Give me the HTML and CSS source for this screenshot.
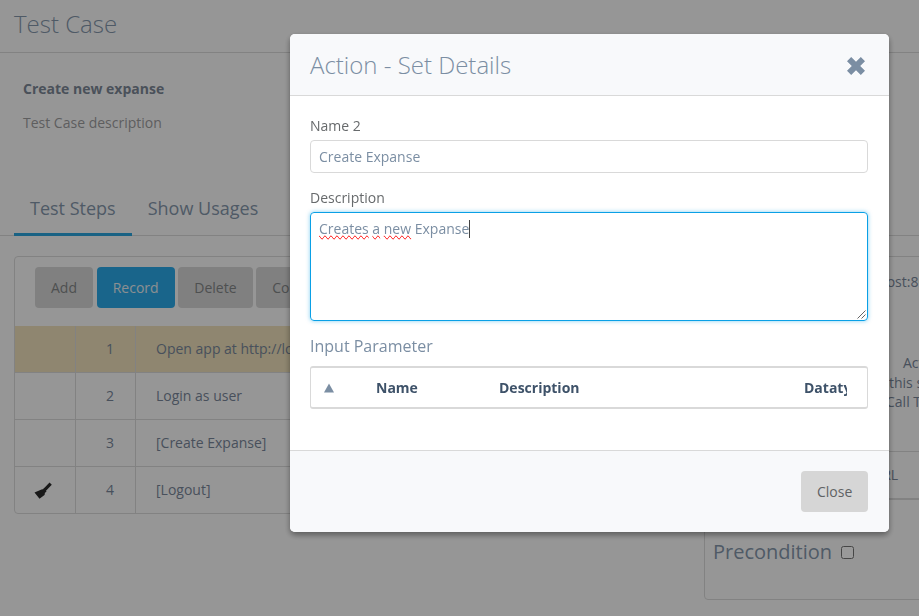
FILE: index.html
```html
<!DOCTYPE html>
<html lang="en">
<head>
    <meta charset="UTF-8">
    <meta name="viewport" content="width=device-width, initial-scale=1.0">
    <title>Test Case</title>
    <link rel="stylesheet" href="styles.css">
</head>
<body>
    <header class="page-head">
        <h1>Test Case</h1>
    </header>

    <section class="summary">
        <p class="summary-name">Create new expanse</p>
        <p class="summary-desc">Test Case description</p>
    </section>

    <nav class="tabs">
        <a class="tab active" href="#">Test Steps</a>
        <a class="tab" href="#">Show Usages</a>
    </nav>

    <main class="content">
        <section class="steps">
            <div class="toolbar">
                <button class="btn">Add</button>
                <button class="btn btn-blue">Record</button>
                <button class="btn">Delete</button>
                <button class="btn">Copy</button>
            </div>
            <div class="step step-warn">
                <div class="step-mark"></div>
                <div class="step-num">1</div>
                <div class="step-text">Open app at http://localhost:8080</div>
            </div>
            <div class="step">
                <div class="step-mark"></div>
                <div class="step-num">2</div>
                <div class="step-text">Login as user</div>
            </div>
            <div class="step">
                <div class="step-mark"></div>
                <div class="step-num">3</div>
                <div class="step-text">[Create Expanse]</div>
            </div>
            <div class="step">
                <div class="step-mark">
                    <svg class="broom" viewBox="0 0 18 17"><path d="M15.500 0.500L17.800 2.800L12 8.800L12.500 9.500L10.800 11Q11 12 10.500 13L5.500 16.800L0.500 10.500L7.500 7.500Q8.500 7 9 7.200L10 6L10.500 5.800Z"/></svg>
                </div>
                <div class="step-num">4</div>
                <div class="step-text">[Logout]</div>
            </div>
        </section>

        <aside class="side">
            <section class="side-box">
                <p class="side-url">http://localhost:8080</p>
                <p class="side-note">
                    <span class="note-a">Actions of</span>
                    <span class="note-b">this step</span>
                    <span class="note-c">Call Test</span>
                </p>
                <div class="side-row">URL</div>
            </section>
            <section class="pre-box">
                <span class="pre-label">Precondition</span>
                <input class="pre-check" type="checkbox">
            </section>
        </aside>
    </main>

    <div class="overlay"></div>

    <div class="modal">
        <div class="modal-head">
            <h2>Action - Set Details</h2>
            <svg class="modal-close" viewBox="0 0 20 20"><path d="M5.200 1l4.800 4.800 4.800-4.800 4.200 4.200-4.800 4.800 4.800 4.800-4.200 4.200-4.800-4.800-4.800 4.800-4.200-4.200 4.800-4.800-4.800-4.800z"/></svg>
        </div>
        <div class="modal-body">
            <label class="field-label">Name 2</label>
            <input class="field" type="text" value="Create Expanse">
            <label class="field-label">Description</label>
            <div class="area">
                <span class="typo">Creates</span> <span class="typo">a</span> <span class="typo">new</span> Expanse<span class="caret"></span>
                <svg class="grip" viewBox="0 0 9 9"><path d="M8.500 0.500l-8 8M8.500 4.500l-4 4"/></svg>
            </div>
            <h3>Input Parameter</h3>
            <div class="param-table">
                <div class="param-sort"><svg viewBox="0 0 10 9"><path d="M5 0l5 9h-10z"/></svg></div>
                <div class="param-name">Name</div>
                <div class="param-desc">Description</div>
                <div class="param-type">Datatype</div>
            </div>
        </div>
        <div class="modal-foot">
            <button class="btn btn-close">Close</button>
        </div>
    </div>
</body>
</html>
```

FILE: styles.css
```css
* { box-sizing: border-box; }
html, body { height: 100%; }
body { margin: 0; overflow: hidden; background: #fbfbfb; color: #676a6c; font-family: "Open Sans", sans-serif; font-size: 14px; }
p, h1, h2, h3 { margin: 0; }

.page-head { height: 53px; padding: 7px 14px 0; border-bottom: 1px solid #d9d9d9; }
.page-head h1 { font-size: 24px; font-weight: 300; line-height: 33px; color: #8496aa; }

.summary { height: 129px; padding: 26px 23px 0; }
.summary-name { font-weight: 700; line-height: 19px; color: #7c8796; }
.summary-desc { margin-top: 15px; line-height: 19px; color: #9d9d9f; }

.tabs { display: flex; height: 54px; padding-left: 14px; border-bottom: 1px solid #d9d9d9; }
.tab { height: 54px; padding: 14px 16px 0; font-size: 18px; line-height: 25px; color: #8496aa; text-decoration: none; }
.tab.active { border-bottom: 3px solid #2aa3dc; }

.content { display: flex; padding: 20px 0 0 14px; gap: 22px; }

.steps { width: 668px; height: 258px; flex: none; border: 1px solid #d9d9d9; border-radius: 4px; }
.toolbar { display: flex; gap: 3.7px; height: 69px; padding: 10px 20px; }
.btn { height: 41px; padding: 0 16px; border: none; border-radius: 4px; background: #d6d6d6; color: #5f6264; font-family: inherit; font-size: 14px; }
.toolbar .btn { color: #828587; }
.toolbar .btn-blue { background: #2aa9e8; color: #e8eef2; }

.step { display: flex; height: 47px; border-top: 1px solid #d9d9d9; line-height: 45px; color: #788699; }
.step-warn { height: 46px; border-top: none; background: #eee0bb; }
.step-mark { display: flex; width: 61px; align-items: center; padding-left: 19px; border-right: 1px solid #d9d9d9; }
.step-num { width: 60px; padding-right: 21px; border-right: 1px solid #d9d9d9; text-align: right; }
.step-text { padding-left: 20px; }
.broom { width: 18px; height: 17px; fill: #2b2b2b; }

.side { flex: none; width: 400px; }
.side-box { display: flex; height: 243px; flex-direction: column; border-top: 1px solid #d9d9d9; color: #788699; }
.side-url { padding: 15px 0 0 103px; line-height: 19px; }
.side-note { margin-top: 62px; line-height: 19.5px; }
.side-note span { display: block; }
.note-a { margin-left: 199px; }
.note-b { margin-left: 185px; }
.note-c { margin-left: 182px; }
.side-row { height: 48px; margin-top: auto; padding-left: 168px; border-top: 1px solid #d9d9d9; border-bottom: 1px solid #d9d9d9; line-height: 46px; }
.pre-box { height: 101px; padding: 38px 8px 0; border: 1px solid #d9d9d9; border-radius: 4px; }
.pre-label { font-size: 20px; line-height: 27px; color: #8496aa; }
.pre-check { width: 13px; height: 13px; margin: 0 0 0 5px; }

.overlay { position: fixed; inset: 0; background: rgba(0, 0, 0, .4); }

.modal { position: fixed; top: 34px; left: 290px; width: 599px; height: 498px; display: flex; flex-direction: column; background: #fff; border-radius: 5px; box-shadow: 0 3px 6px rgba(0, 0, 0, .4); overflow: hidden; }
.modal-head { display: flex; height: 62px; flex: none; align-items: center; justify-content: space-between; padding: 0 23px 0 20px; background: #f8f9fb; border-bottom: 1px solid #d9d9d9; }
.modal-head h2 { font-size: 24px; font-weight: 300; color: #7b8ea3; }
.modal-close { width: 20px; height: 20px; margin-top: 2px; fill: #7b8ea3; }
.modal-body { flex: 1; padding: 20px 21px 0 20px; }
.field-label { display: block; line-height: 19px; }
.field { display: block; width: 100%; height: 33px; margin: 5px 0 15px; padding: 0 8px; border: 1px solid #d9d9d9; border-radius: 4px; color: #7b8ea3; font-family: inherit; font-size: 14px; }
.area { position: relative; height: 109px; margin-top: 5px; padding: 6px 8px; border: 1px solid #0aa0e6; border-radius: 4px; box-shadow: 0 0 4px rgba(10, 160, 230, .5); line-height: 20px; color: #7b8ea3; }
.typo { text-decoration: underline wavy #e02020 1px; text-decoration: spelling-error; }
.caret { display: inline-block; width: 1px; height: 18px; margin-bottom: -4px; background: #444; }
.grip { position: absolute; right: 1px; bottom: 1px; width: 9px; height: 9px; fill: none; stroke: #666; stroke-width: 1; }
h3 { margin-top: 14px; font-size: 16px; font-weight: 400; line-height: 22px; color: #7b8ea3; }
.param-table { display: flex; align-items: center; height: 43px; margin-top: 9px; border: 1px solid #d9d9d9; border-top-width: 2px; border-bottom-width: 2px; border-radius: 3px; font-weight: 700; color: #3e5269; }
.param-sort { width: 65px; padding-left: 13px; }
.param-sort svg { display: block; width: 10px; height: 10px; fill: #7b8ea3; }
.param-name { width: 123px; }
.param-desc { width: 305px; }
.param-type { width: 43px; overflow: hidden; white-space: nowrap; }
.modal-foot { display: flex; height: 82px; flex: none; align-items: center; justify-content: flex-end; padding: 0 21px; background: #f8f9fb; border-top: 1px solid #d9d9d9; }
.btn-close { width: 67px; }
```
